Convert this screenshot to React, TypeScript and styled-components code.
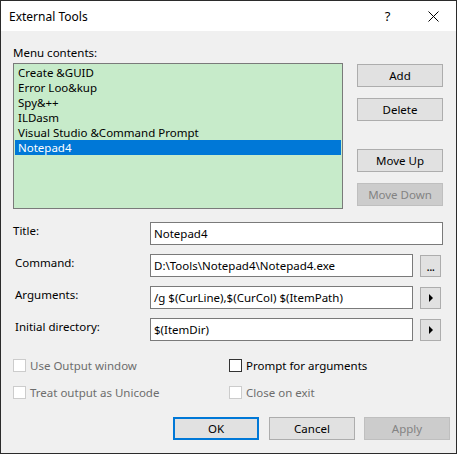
import React from "react";
import styled, { createGlobalStyle } from "styled-components";

const GlobalStyle = createGlobalStyle`
  html, body {
    margin: 0;
    padding: 0;
    background: #ffffff;
  }
  * {
    box-sizing: border-box;
  }
`;

const tools = [
  "Create &GUID",
  "Error Loo&kup",
  "Spy&++",
  "ILDasm",
  "Visual Studio &Command Prompt",
  "Notepad4",
];

const App = () => {
  const selected = 5;

  return (
    <>
      <GlobalStyle />
      <Window>
        <TitleBar>
          <Caption>External Tools</Caption>
          <TitleButton>?</TitleButton>
          <TitleButton>
            <svg width="11" height="11" viewBox="0 0 11 11">
              <path d="M0.5 0.5 L10.5 10.5 M10.5 0.5 L0.5 10.5" stroke="#000" strokeWidth="1" />
            </svg>
          </TitleButton>
        </TitleBar>

        <Body>
          <SectionLabel>Menu contents:</SectionLabel>
          <ListRow>
            <ListBox>
              {tools.map((t, i) => (
                <ListItem key={t} $selected={i === selected}>
                  {t}
                </ListItem>
              ))}
            </ListBox>
            <SideButtons>
              <Button>Add</Button>
              <Button>Delete</Button>
              <Spacer />
              <Button>Move Up</Button>
              <Button disabled>Move Down</Button>
            </SideButtons>
          </ListRow>

          <Form>
            <FieldRow>
              <FieldLabel $indent={0}>Title:</FieldLabel>
              <TextBox $wide>Notepad4</TextBox>
            </FieldRow>
            <FieldRow>
              <FieldLabel $indent={2}>Command:</FieldLabel>
              <TextBox>D:\Tools\Notepad4\Notepad4.exe</TextBox>
              <SmallButton>
                <Dots>...</Dots>
              </SmallButton>
            </FieldRow>
            <FieldRow>
              <FieldLabel $indent={2}>Arguments:</FieldLabel>
              <TextBox>/g $(CurLine),$(CurCol) $(ItemPath)</TextBox>
              <SmallButton>
                <Arrow />
              </SmallButton>
            </FieldRow>
            <FieldRow>
              <FieldLabel $indent={2}>Initial directory:</FieldLabel>
              <TextBox>$(ItemDir)</TextBox>
              <SmallButton>
                <Arrow />
              </SmallButton>
            </FieldRow>
          </Form>

          <Options>
            <Check $disabled>
              <Box $disabled />
              Use Output window
            </Check>
            <Check>
              <Box />
              Prompt for arguments
            </Check>
            <Check $disabled>
              <Box $disabled />
              Treat output as Unicode
            </Check>
            <Check $disabled>
              <Box $disabled />
              Close on exit
            </Check>
          </Options>

          <Footer>
            <Button $default>OK</Button>
            <Button>Cancel</Button>
            <Button disabled>Apply</Button>
          </Footer>
        </Body>
      </Window>
    </>
  );
};

export default App;

const Window = styled.div`
  width: 457px;
  height: 454px;
  border: 1px solid #2b2b2b;
  background: #f0f0f0;
  display: flex;
  flex-direction: column;
  font-family: "Segoe UI", "Noto Sans", sans-serif;
  font-size: 11.5px;
  line-height: 15px;
  color: #000;
  overflow: hidden;
`;

const TitleBar = styled.div`
  height: 30px;
  background: #ffffff;
  display: flex;
  align-items: center;
  padding-left: 8px;
`;

const Caption = styled.div`
  flex: 1;
  font-size: 12px;
`;

const TitleButton = styled.div`
  width: 45px;
  height: 30px;
  display: flex;
  align-items: center;
  justify-content: center;
  font-size: 13px;
  &:last-child {
    width: 46px;
  }
`;

const Body = styled.div`
  flex: 1;
  padding: 14px 6px 0 12px;
  display: flex;
  flex-direction: column;
`;

const SectionLabel = styled.div`
  height: 15px;
  margin-bottom: 3px;
`;

const ListRow = styled.div`
  display: flex;
  align-items: flex-start;
`;

const ListBox = styled.div`
  width: 330px;
  height: 146px;
  border: 1px solid #7a7a7a;
  background: #c7ebca;
  padding: 1px 1px;
`;

const ListItem = styled.div<{ $selected?: boolean }>`
  height: 15px;
  padding-left: 3px;
  white-space: nowrap;
  background: ${(p) => (p.$selected ? "#0078d7" : "transparent")};
  color: ${(p) => (p.$selected ? "#ffffff" : "#000000")};
`;

const SideButtons = styled.div`
  margin-left: 14px;
  padding-top: 1px;
  display: flex;
  flex-direction: column;
  gap: 11px;
`;

const Spacer = styled.div`
  height: 17px;
  margin-bottom: -11px;
`;

const Button = styled.button<{ $default?: boolean }>`
  width: 86px;
  height: 23px;
  padding: 0;
  font-family: inherit;
  font-size: 11.5px;
  color: #000;
  background: #e1e1e1;
  border: ${(p) => (p.$default ? "2px solid #0078d7" : "1px solid #adadad")};
  display: flex;
  align-items: center;
  justify-content: center;
  &:disabled {
    background: #cccccc;
    border-color: #bfbfbf;
    color: #838383;
  }
`;

const Form = styled.div`
  margin-top: 13px;
  display: flex;
  flex-direction: column;
  gap: 9px;
`;

const FieldRow = styled.div`
  display: flex;
  align-items: flex-start;
`;

const FieldLabel = styled.div<{ $indent: number }>`
  width: 137px;
  padding-top: 1px;
  padding-left: ${(p) => p.$indent}px;
`;

const TextBox = styled.div<{ $wide?: boolean }>`
  width: ${(p) => (p.$wide ? 293 : 263)}px;
  height: 23px;
  border: 1px solid #7a7a7a;
  background: #ffffff;
  padding: 3px 3px;
  white-space: nowrap;
  overflow: hidden;
`;

const SmallButton = styled.div`
  width: 21px;
  height: 22px;
  margin-left: 7px;
  margin-top: 1px;
  background: #e1e1e1;
  border: 1px solid #adadad;
  display: flex;
  align-items: center;
  justify-content: center;
`;

const Dots = styled.span`
  font-size: 12px;
  line-height: 12px;
  margin-top: 2px;
  letter-spacing: -0.5px;
`;

const Arrow = styled.span`
  width: 0;
  height: 0;
  border-top: 4px solid transparent;
  border-bottom: 4px solid transparent;
  border-left: 4px solid #000;
`;

const Options = styled.div`
  margin-top: 17px;
  display: grid;
  grid-template-columns: 216px 1fr;
  row-gap: 12px;
`;

const Check = styled.div<{ $disabled?: boolean }>`
  display: flex;
  align-items: center;
  gap: 4px;
  height: 15px;
  color: ${(p) => (p.$disabled ? "#6d6d6d" : "#000")};
`;

const Box = styled.span<{ $disabled?: boolean }>`
  width: 13px;
  height: 13px;
  background: #ffffff;
  border: 1px solid ${(p) => (p.$disabled ? "#cccccc" : "#333333")};
`;

const Footer = styled.div`
  margin-top: 17px;
  display: flex;
  justify-content: flex-end;
  gap: 9px;
  & > :first-child {
    margin-right: 1px;
  }
`;
